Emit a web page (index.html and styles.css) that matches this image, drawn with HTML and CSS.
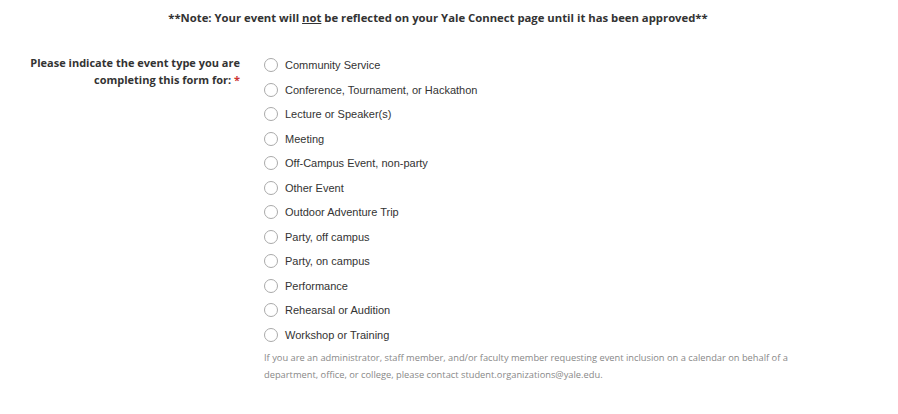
FILE: index.html
```html
<!DOCTYPE html>
<html lang="en">
<head>
    <meta charset="UTF-8">
    <meta name="viewport" content="width=device-width, initial-scale=1.0">
    <title>Event Registration</title>
    <link rel="stylesheet" href="styles.css">
</head>
<body>
    <p class="note">**Note: Your event will <u>not</u> be reflected on your Yale Connect page until it has been approved**</p>

    <div class="form-row">
        <div class="question">Please indicate the event type you are completing this form for:&nbsp;<span class="req">*</span></div>
        <div class="answers">
            <label class="option"><input type="radio" name="type"><span>Community Service</span></label>
            <label class="option"><input type="radio" name="type"><span>Conference, Tournament, or Hackathon</span></label>
            <label class="option"><input type="radio" name="type"><span>Lecture or Speaker(s)</span></label>
            <label class="option"><input type="radio" name="type"><span>Meeting</span></label>
            <label class="option"><input type="radio" name="type"><span>Off-Campus Event, non-party</span></label>
            <label class="option"><input type="radio" name="type"><span>Other Event</span></label>
            <label class="option"><input type="radio" name="type"><span>Outdoor Adventure Trip</span></label>
            <label class="option"><input type="radio" name="type"><span>Party, off campus</span></label>
            <label class="option"><input type="radio" name="type"><span>Party, on campus</span></label>
            <label class="option"><input type="radio" name="type"><span>Performance</span></label>
            <label class="option"><input type="radio" name="type"><span>Rehearsal or Audition</span></label>
            <label class="option"><input type="radio" name="type"><span>Workshop or Training</span></label>
            <p class="help">If you are an administrator, staff member, and/or faculty member requesting event inclusion on a calendar on behalf of a department, office, or college, please contact student.organizations@yale.edu.</p>
        </div>
    </div>
</body>
</html>
```

FILE: styles.css
```css
body {
    margin: 0;
    font-family: "Open Sans", sans-serif;
    color: #333;
    background: #fff;
}
.note {
    margin: 0;
    padding: 9px 22px 0 0;
    text-align: center;
    font-size: 11.3px;
    font-weight: bold;
    line-height: 18px;
}
.form-row {
    display: grid;
    grid-template-columns: 240px 1fr;
    column-gap: 24px;
    margin-top: 26px;
}
.question {
    text-align: right;
    font-size: 11px;
    font-weight: bold;
    line-height: 17px;
    padding: 1px 0 0 24px;
}
.req {
    color: #c33;
}
.answers {
    display: flex;
    flex-direction: column;
}
.option {
    display: flex;
    align-items: center;
    height: 24.5px;
    font-family: "Liberation Sans", Arial, sans-serif;
    font-size: 11px;
    color: #333;
    cursor: pointer;
}
.option input {
    appearance: none;
    width: 14px;
    height: 14px;
    margin: 0 7px 0 0;
    border: 1px solid #aaa;
    border-radius: 50%;
    background: #fff;
}
.help {
    margin: 2px 0 0;
    width: 545px;
    font-size: 9.3px;
    line-height: 17px;
    color: #888;
}
```
